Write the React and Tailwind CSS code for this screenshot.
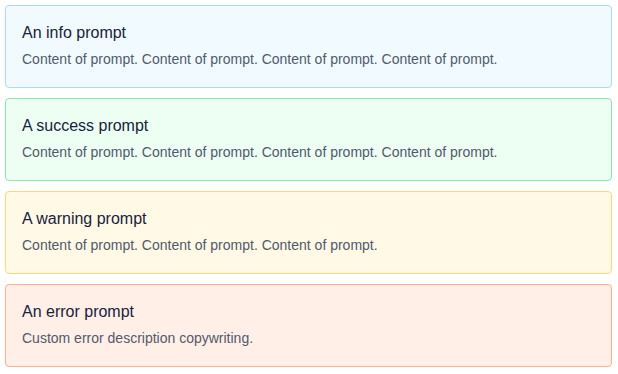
import React from 'react';

const prompts = [
    {
        title: 'An info prompt',
        desc: 'Content of prompt. Content of prompt. Content of prompt. Content of prompt.',
        box: 'bg-[#f0faff] border-[#abdcff]'
    },
    {
        title: 'A success prompt',
        desc: 'Content of prompt. Content of prompt. Content of prompt. Content of prompt.',
        box: 'bg-[#edfff3] border-[#8ce6b0]'
    },
    {
        title: 'A warning prompt',
        desc: 'Content of prompt. Content of prompt. Content of prompt.',
        box: 'bg-[#fff9e6] border-[#ffd77a]'
    },
    {
        title: 'An error prompt',
        desc: 'Custom error description copywriting.',
        box: 'bg-[#ffefe6] border-[#ffb08f]'
    }
];

const App = () => {
    return (
        <div className="w-[618px] h-[374px] bg-white pt-[5px] pl-[5px] pr-[6px] flex flex-col gap-[10px] font-['Liberation_Sans',Arial,sans-serif]">
            {prompts.map((p) => (
                <div key={p.title} className={`border rounded px-4 pt-4 pb-[17px] ${p.box}`}>
                    <div className="text-base leading-[22px] text-[#17233d]">{p.title}</div>
                    <div className="mt-[5px] text-sm leading-[21px] text-[#515a6e]">{p.desc}</div>
                </div>
            ))}
        </div>
    );
};

export default App;
